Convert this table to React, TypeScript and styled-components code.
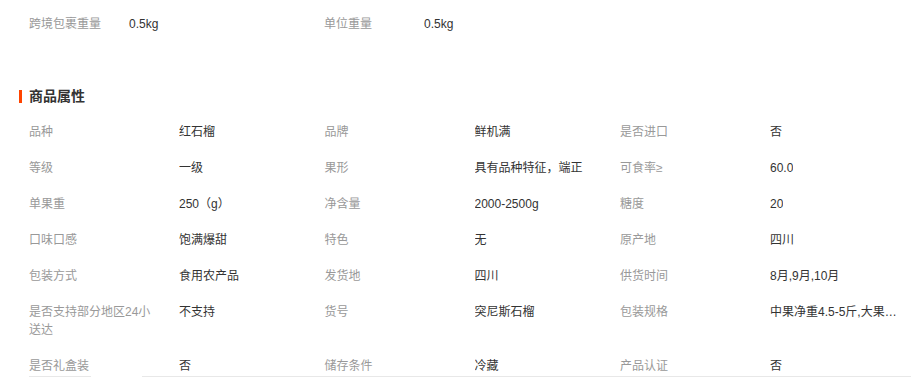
import React from "react";
import styled, { createGlobalStyle } from "styled-components";

const GlobalStyle = createGlobalStyle`
  html, body {
    margin: 0;
    padding: 0;
    background: #fff;
  }
  body {
    font-family: Tahoma, "Liberation Sans", "Noto Sans CJK SC", sans-serif;
    font-size: 12px;
    color: #333;
  }
`;

type Attr = { label: string; value: string };

const packInfo: Attr[] = [
  { label: "跨境包裹重量", value: "0.5kg" },
  { label: "单位重量", value: "0.5kg" },
];

const attrs: Attr[] = [
  { label: "品种", value: "红石榴" },
  { label: "品牌", value: "鲜机满" },
  { label: "是否进口", value: "否" },
  { label: "等级", value: "一级" },
  { label: "果形", value: "具有品种特征，端正" },
  { label: "可食率≥", value: "60.0" },
  { label: "单果重", value: "250（g）" },
  { label: "净含量", value: "2000-2500g" },
  { label: "糖度", value: "20" },
  { label: "口味口感", value: "饱满爆甜" },
  { label: "特色", value: "无" },
  { label: "原产地", value: "四川" },
  { label: "包装方式", value: "食用农产品" },
  { label: "发货地", value: "四川" },
  { label: "供货时间", value: "8月,9月,10月" },
  { label: "是否支持部分地区24小送达", value: "不支持" },
  { label: "货号", value: "突尼斯石榴" },
  { label: "包装规格", value: "中果净重4.5-5斤,大果净重5-5.5斤" },
  { label: "是否礼盒装", value: "否" },
  { label: "储存条件", value: "冷藏" },
  { label: "产品认证", value: "否" },
];

const App: React.FC = () => {
  return (
    <>
      <GlobalStyle />
      <Page>
        <PackRow>
          {packInfo.map((a) => (
            <PackItem key={a.label}>
              <PackLabel>{a.label}</PackLabel>
              <PackValue>{a.value}</PackValue>
            </PackItem>
          ))}
        </PackRow>
        <SectionTitle>商品属性</SectionTitle>
        <AttrGrid>
          {attrs.map((a) => (
            <AttrItem key={a.label}>
              <AttrLabel>{a.label}</AttrLabel>
              <AttrValue title={a.value}>{a.value}</AttrValue>
            </AttrItem>
          ))}
        </AttrGrid>
      </Page>
      <StickyBar>
        <BarLine $width="62px" />
        <BarLine $grow />
      </StickyBar>
    </>
  );
};

const Page = styled.div`
  width: 911px;
  overflow: hidden;
`;

const PackRow = styled.div`
  display: flex;
  padding: 15px 0 0 29px;
`;

const PackItem = styled.div`
  display: flex;
  width: 295px;
  line-height: 18px;
`;

const PackLabel = styled.span`
  width: 100px;
  color: #999;
`;

const PackValue = styled.span`
  color: #333;
`;

const SectionTitle = styled.h3`
  display: flex;
  align-items: center;
  margin: 53px 0 8px 19px;
  font-size: 14px;
  font-weight: bold;
  line-height: 20px;
  color: #333;

  &::before {
    content: "";
    width: 3px;
    height: 13px;
    margin-right: 7px;
    background: #ff4400;
  }
`;

const AttrGrid = styled.ul`
  display: grid;
  grid-template-columns: repeat(3, 295.5px);
  margin: 0;
  padding: 0 0 0 29px;
  list-style: none;
`;

const AttrItem = styled.li`
  display: flex;
  align-items: flex-start;
  padding: 9px 0;
  line-height: 18px;
`;

const AttrLabel = styled.span`
  flex: 0 0 126px;
  margin-right: 24px;
  color: #999;
  word-break: break-all;
`;

const AttrValue = styled.span`
  max-width: 127px;
  color: #333;
  white-space: nowrap;
  overflow: hidden;
  text-overflow: ellipsis;
`;

const StickyBar = styled.div`
  position: fixed;
  left: 0;
  right: 0;
  bottom: 0;
  display: flex;
  gap: 51px;
  padding-left: 29px;
  height: 1px;
`;

const BarLine = styled.div<{ $width?: string; $grow?: boolean }>`
  height: 1px;
  background: #e8e8e8;
  width: ${(p) => p.$width || "auto"};
  flex: ${(p) => (p.$grow ? 1 : "none")};
`;

export default App;
